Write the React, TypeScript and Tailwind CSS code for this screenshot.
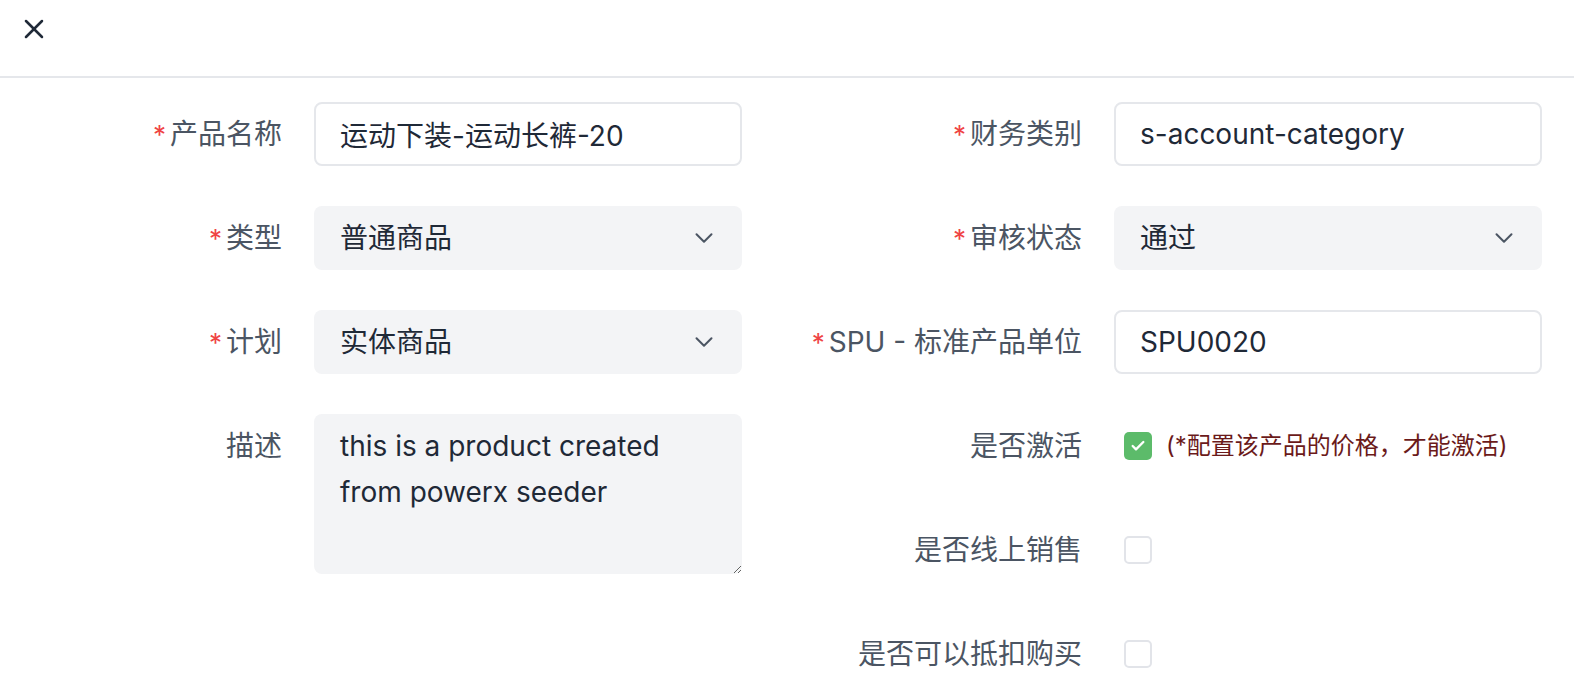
import { Check, ChevronDown, X } from "lucide-react";

const font = "font-['Inter','Noto_Sans_CJK_SC',sans-serif]";

function Label({ text, required }: { text: string; required?: boolean }) {
  return (
    <div className="flex h-16 w-[244px] shrink-0 items-center justify-end whitespace-nowrap text-[28px] text-[#4b5563]">
      {required && <span className="mr-1 text-[26px] text-[#ef4444]">*</span>}
      <span>{text}</span>
    </div>
  );
}

function TextInput({ value }: { value: string }) {
  return (
    <input
      readOnly
      defaultValue={value}
      className="h-16 w-[428px] rounded-lg border-2 border-[#e5e7eb] bg-white px-6 text-[28px] text-[#1f2937] outline-none"
    />
  );
}

function Select({ value }: { value: string }) {
  return (
    <div className="flex h-16 w-[428px] items-center justify-between rounded-lg bg-[#f3f4f6] pl-[26px] pr-[23px] text-[28px] text-[#1f2937]">
      <span>{value}</span>
      <ChevronDown className="h-[30px] w-[30px] text-[#4b5563]" strokeWidth={1.6} />
    </div>
  );
}

function Box({ checked }: { checked?: boolean }) {
  return checked ? (
    <span className="grid h-7 w-7 place-items-center rounded-[5px] bg-[#5cbb6a]">
      <Check className="h-4 w-4 text-white" strokeWidth={3.5} />
    </span>
  ) : (
    <span className="h-7 w-7 rounded-[5px] border-2 border-[#e2e4e9] bg-white" />
  );
}

function Row({ children }: { children: React.ReactNode }) {
  return <div className="flex items-start gap-8">{children}</div>;
}

export default function App() {
  return (
    <div className={`min-h-screen bg-white ${font}`}>
      <header className="flex h-[78px] items-start border-b-2 border-[#e5e7eb] pl-[18px] pt-[13px]">
        <X className="h-8 w-8 text-[#1f2937]" strokeWidth={1.9} />
      </header>

      <div className="flex gap-x-[96px] px-[38px] pt-[24px]">
        <div className="flex flex-col gap-10">
          <Row>
            <Label text="产品名称" required />
            <TextInput value="运动下装-运动长裤-20" />
          </Row>
          <Row>
            <Label text="类型" required />
            <Select value="普通商品" />
          </Row>
          <Row>
            <Label text="计划" required />
            <Select value="实体商品" />
          </Row>
          <Row>
            <Label text="描述" />
            <textarea
              readOnly
              defaultValue="this is a product created from powerx seeder"
              className="h-[160px] w-[428px] resize-y rounded-lg bg-[#f3f4f6] px-[26px] pt-[9px] text-[28px] leading-[46px] text-[#1f2937] outline-none"
            />
          </Row>
        </div>

        <div className="flex flex-col gap-10">
          <Row>
            <Label text="财务类别" required />
            <TextInput value="s-account-category" />
          </Row>
          <Row>
            <Label text="审核状态" required />
            <Select value="通过" />
          </Row>
          <Row>
            <Label text="SPU - 标准产品单位" required />
            <TextInput value="SPU0020" />
          </Row>
          <Row>
            <Label text="是否激活" />
            <div className="flex h-16 items-center gap-[14px] pl-[10px]">
              <Box checked />
              <span className="text-[24px] text-[#6b1a1a]">(*配置该产品的价格，才能激活)</span>
            </div>
          </Row>
          <Row>
            <Label text="是否线上销售" />
            <div className="flex h-16 items-center pl-[10px]">
              <Box />
            </div>
          </Row>
          <Row>
            <Label text="是否可以抵扣购买" />
            <div className="flex h-16 items-center pl-[10px]">
              <Box />
            </div>
          </Row>
        </div>
      </div>
    </div>
  );
}
